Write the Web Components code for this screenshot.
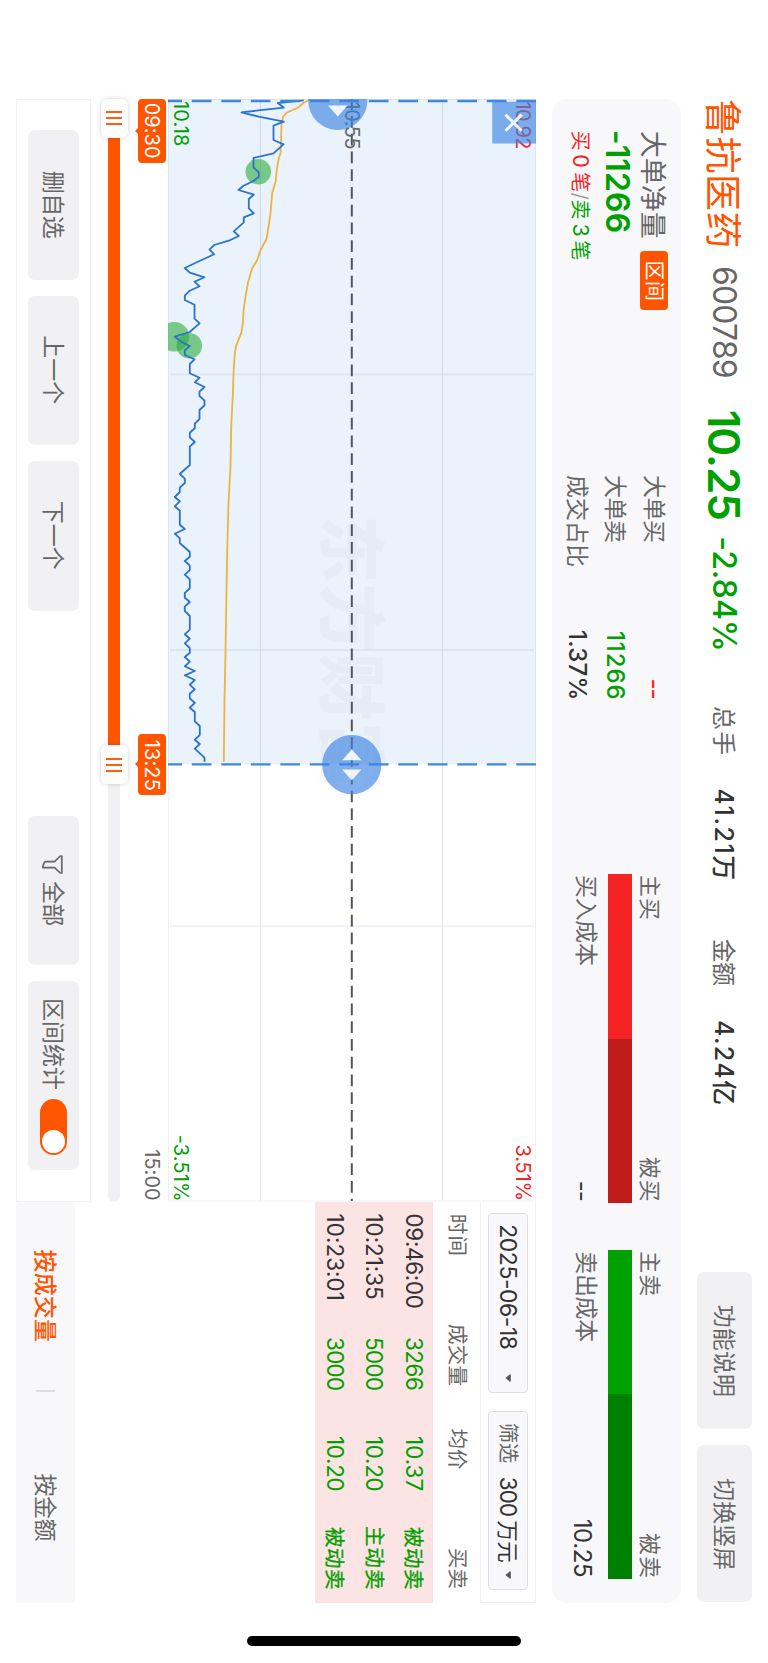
<!DOCTYPE html>
<html lang="zh-CN">
<head>
<meta charset="utf-8">
<title>大单净量</title>
<style>
html,body{margin:0;padding:0;background:#fff}
body{width:768px;height:1663px;overflow:hidden;position:relative}
</style>
</head>
<body>
<stock-app></stock-app>
<script>
const define = (name, css, html, setup) => {
  const tpl = document.createElement('template');
  tpl.innerHTML = `<style>:host{box-sizing:border-box}*{box-sizing:border-box}${css}</style>${html}`;
  customElements.define(name, class extends HTMLElement {
    connectedCallback() {
      if (this.shadowRoot) return;
      this.attachShadow({mode: 'open'}).append(tpl.content.cloneNode(true));
      if (setup) setup(this, this.shadowRoot);
    }
  });
};

/* One line of text spaced so that its ink fills exactly w pixels.
   w: width, s: font size, b: weight, c: colour, g: gap before, d: vertical nudge */
const FAMILY = 'Inter, "Noto Sans CJK SC", sans-serif';
const pen = document.createElement('canvas').getContext('2d');
define('fit-text', `:host{display:block;flex:none;white-space:nowrap;line-height:1}`, `<slot></slot>`, el => {
  const a = (k, f) => el.getAttribute(k) || f;
  const text = el.textContent, size = a('s', 23), weight = a('b', 400), w = +a('w', 50);
  pen.font = `${weight} ${size}px ${FAMILY}`;
  const m = pen.measureText(text);
  const ink = m.actualBoundingBoxLeft + m.actualBoundingBoxRight;
  const n = [...text].length;
  const nudge = a('d', /^[\u4e00-\u9fff]/.test(text) ? size * .055 : 0);
  Object.assign(el.style, {
    font: `${weight} ${size}px/1 ${FAMILY}`, color: a('c', '#666'), width: w + 'px',
    letterSpacing: (n > 1 ? (w - ink) / (n - 1) : 0) + 'px',
    textIndent: m.actualBoundingBoxLeft + 'px',
    marginLeft: a('g', 0) + 'px', marginTop: 2 * nudge + 'px'
  });
});

define('soft-button', `:host{display:flex;flex:none;align-items:center;justify-content:center;background:#f1f1f3;border-radius:7px}`, `<slot></slot>`);

define('quote-header', `
:host{display:flex;height:87px;align-items:center}
soft-button{height:55px;width:157.5px}`, `
<fit-text g="1" w="146.5" s="37" c="#ff5400" b="400">鲁抗医药</fit-text>
<fit-text g="20.5" w="109.7" s="32" d=".8">600789</fit-text>
<fit-text g="35" w="107.6" s="44" b="560" c="#00a000" d=".8">10.25</fit-text>
<fit-text g="19" w="110.7" s="32" b="500" c="#00a000" d=".8">-2.84%</fit-text>
<fit-text g="58" w="47.3" s="24">总手</fit-text>
<fit-text g="35" w="90" s="25" b="540" c="#333" d=".8">41.21万</fit-text>
<fit-text g="59.4" w="47.3" s="24">金额</fit-text>
<fit-text g="35" w="83" s="25" b="540" c="#333" d=".8">4.24亿</fit-text>
<soft-button style="margin-left:167.7px"><fit-text w="91.3">功能说明</fit-text></soft-button>
<soft-button style="margin-left:15.8px"><fit-text w="91.3">切换竖屏</fit-text></soft-button>`);

define('cost-bar', `
:host{display:block;width:328.7px;padding-top:20.7px}
.row{display:flex;justify-content:space-between;align-items:center;padding:0 2px}
.top{height:22px}.bar{height:23.7px;margin-top:6.6px;display:flex}.bottom{height:44.6px}
i{display:block;height:100%;background:var(--a)}i+i{flex:1;background:var(--b)}`, `
<div class="row top"><slot name="active"></slot><slot name="passive"></slot></div>
<div class="bar"><i></i><i></i></div>
<div class="row bottom"><slot name="cost"></slot><slot name="value"></slot></div>`,
(el, root) => { root.querySelector('i').style.width = el.getAttribute('split') + 'px'; });

define('order-panel', `
:host{display:flex;height:129px;width:1503.7px;border-radius:15px;background:#f8f8fb}
.net{width:376px;padding:8.2px 0 0 32.7px}
.net>div{display:flex;height:37px;align-items:center}
.tag{display:flex;align-items:center;justify-content:center;width:59.3px;height:28px;margin-left:13.3px;border-radius:4px;background:#ff5400}
.sum{width:223.5px;padding-top:7.5px}
.sum>div{display:flex;height:38.3px;align-items:center;justify-content:space-between}`, `
<div class="net">
 <div><fit-text w="106" s="27">大单净量</fit-text><span class="tag"><fit-text w="38.5" s="20" c="#fff" d=".3">区间</fit-text></span></div>
 <div><fit-text w="100" s="32" b="600" c="#00a000" d=".2">-11266</fit-text></div>
 <div><fit-text w="18.5" s="20" c="#f52424" d=".5">买</fit-text><fit-text g="5" w="11.5" s="21.5" c="#f52424" d=".3">0</fit-text><fit-text g="5.4" w="18.8" s="20" c="#f52424" d=".5">笔</fit-text><fit-text g="1.6" w="6.4" s="20" c="#999">/</fit-text><fit-text g="1.6" w="18.5" s="20" c="#00a000" d=".5">卖</fit-text><fit-text g="5.6" w="11" s="21.5" c="#00a000" d=".3">3</fit-text><fit-text g="4.8" w="18.8" s="20" c="#00a000" d=".5">笔</fit-text></div>
</div>
<div class="sum">
 <div><fit-text w="67">大单买</fit-text><fit-text w="19" s="24" b="500" c="#f52424" d=".8">--</fit-text></div>
 <div><fit-text w="67">大单卖</fit-text><fit-text w="66.6" s="24" b="540" c="#00a000" d=".6">11266</fit-text></div>
 <div><fit-text w="91">成交占比</fit-text><fit-text w="67.6" s="24" b="540" c="#333" d=".6">1.37%</fit-text></div>
</div>
<cost-bar split="164.7" style="margin-left:175.5px;--a:#f52424;--b:#c01c1c">
 <fit-text slot="active" w="43" s="22" d="-.6">主买</fit-text><fit-text slot="passive" w="44" s="22" d="-.6">被买</fit-text>
 <fit-text slot="cost" w="90" d=".4">买入成本</fit-text><fit-text slot="value" w="19" s="24" c="#333" d="4.2">--</fit-text>
</cost-bar>
<cost-bar split="144" style="margin-left:47.6px;--a:#00a000;--b:#008000">
 <fit-text slot="active" w="43" s="22" d="-.6">主卖</fit-text><fit-text slot="passive" w="44" s="22" d="-.6">被卖</fit-text>
 <fit-text slot="cost" w="90" d=".4">卖出成本</fit-text><fit-text slot="value" w="57.3" s="24" c="#333" d="4.2">10.25</fit-text>
</cost-bar>`);

/* Samples are [level, time], both in thirds of a pixel from the plot's lower left. */
const PRICE = '430,31 352,39 370,53 243,67 295,80 370,95 339,107 339,150 369,163 339,190 279,204 279,232 295,247 295,260 279,273 249,287 234,300 280,314 265,327 265,355 280,370 250,382 250,397 220,424 235,438 205,452 161,465 147,479 161,493 117,513 73,534 88,548 132,562 102,575 117,589 88,602 73,617 73,630 102,644 102,686 117,700 88,726 43,740 62,755 88,768 73,781 73,795 102,808 88,822 88,850 117,863 103,877 132,891 117,905 117,918 132,932';
const PRICE2 = '132,16 117,30 117,57 103,71 103,85 88,98 88,112 103,126 88,140 88,195 58,222 73,236 73,249 58,263 58,276 43,291 58,304 43,319 58,332 58,374 73,387 43,401 58,415 58,429 88,456 88,470 73,483 88,497 88,510 73,524 88,538 88,565 73,579 73,593 88,606 73,620 73,633 88,648 88,689 73,703 88,716 73,730 88,744 88,758 73,771 88,785 73,799 103,813 73,826 103,840 88,854 103,868 88,881 88,895 103,909 88,923 103,936 103,964 118,978 118,1005 103,1019 118,1032 103,1046 132,1073 132,1085';
const AVG = '445,31 430,38 412,53 378,68 368,80 363,100 362,140 360,190 355,205 350,230 345,275 335,310 330,370 325,405 318,447 300,480 290,510 275,535 263,575 255,620 250,655 247,700 243,727 226,770 222,800 219,850 217,920';
const AVG2 = '216,0 212,80 210,200 204,310 200,450 197,620 195,760 192,900 190,1085';
const trace = (s, off) => s.split(' ').map(p => { const [v, t] = p.split(',').map(Number);
  return ((t + off) / 3 - 9).toFixed(1) + ',' + (375.5 - v / 3).toFixed(1); }).join(' ');

define('time-chart', `
:host{display:block;position:relative;width:1102.5px;height:368px}
svg{display:block;position:absolute;left:0;top:0}
.lab{position:absolute}
.over{z-index:2}`, `
<svg width="1103" height="368" viewBox="0 0 1103 368">
 <g fill="none">
 <path d="M275.4 2V366M551 2V366M827.2 2V366" stroke="#eef1f7" stroke-width="1.8"/>
 <path d="M0 93.5H1102M0 275.5H1102" stroke="#dfe3ee" stroke-width="1"/>
 <rect x=".5" y=".5" width="1101.5" height="367" stroke="#f0f0f3"/>
 </g>
 <text x="416" y="210" font-family="Noto Sans CJK SC, sans-serif" font-size="68" letter-spacing="1" font-weight="900" fill="#000" fill-opacity=".025">东方财富</text>
 <rect width="665.3" height="368" fill="#2f7fe0" fill-opacity=".1"/>
 <path d="M0 184.2H1102" stroke="#555" stroke-width="2" stroke-dasharray="11.7 6.05" stroke-dashoffset=".7"/>
</svg>
<fit-text class="lab" style="left:2.5px;top:2.7px" w="46.8" s="20" c="#f52424">10.92</fit-text>
<fit-text class="lab" style="left:2.5px;top:173.7px" w="47" s="20">10.55</fit-text>
<fit-text class="lab" style="left:2px;top:344.8px" w="45" s="20" c="#00a000">10.18</fit-text>
<fit-text class="lab" style="left:1046.5px;top:2.7px" w="54" s="20" c="#f52424">3.51%</fit-text>
<fit-text class="lab" style="left:1036.7px;top:344.8px" w="64.3" s="20" c="#00a000">-3.51%</fit-text>
<svg class="over" width="1103" height="368" viewBox="0 0 1103 368">
 <g fill="#2aab3c" fill-opacity=".6"><circle cx="72.7" cy="277.7" r="12.8"/><circle cx="237.7" cy="361.7" r="14.8"/><circle cx="246.7" cy="346.7" r="12.8"/></g>
 <g fill="none" stroke-linejoin="round" stroke-width="1.8"><polyline id="avg" stroke="#efb240"/><polyline id="price" stroke="#2a72cc"/></g>
 <path d="M2 0V368M665.3 0V368" stroke="#3e86e6" stroke-width="2.3" stroke-dasharray="19.7 9.8"/>
 <g fill="#3a83e2" fill-opacity=".64"><circle cx="1.3" cy="198.2" r="29.6"/><circle cx="665.6" cy="184.2" r="29.6"/><path d="M2.8 0H44.6V43.8H2.8z"/></g>
 <g fill="#fff" fill-opacity=".88"><path d="M6.5 188.5v19.4L17.5 198.2zM661.3 174.5v19.4L650.5 184.2zM670.6 174.5v19.4L681.2 184.2z"/></g>
 <path d="M15.6 14.3l16.2 16.2M31.8 14.3L15.6 30.5" stroke="#fff" stroke-opacity=".88" stroke-width="3"/>
</svg>`, (el, root) => {
  root.getElementById('price').setAttribute('points', trace(PRICE, 0) + ' ' + trace(PRICE2, 930));
  root.getElementById('avg').setAttribute('points', trace(AVG, 0) + ' ' + trace(AVG2, 930));
});

define('time-tag', `
:host{position:absolute;top:2.2px;display:flex;align-items:center;justify-content:center;height:27.7px;border-radius:4px;background:#ff5400}
i{position:absolute;top:27px;left:var(--arrow,50%);margin-left:-4.5px;border:4.5px solid transparent;border-top-color:#ff5400;border-bottom:0}`, `<slot></slot><i></i>`);

define('slider-thumb', `
:host{position:absolute;top:40px;width:39.3px;height:27.4px;border-radius:6px;background:#fff;box-shadow:0 0 5px rgba(0,0,0,.18);display:flex;align-items:center;justify-content:center;gap:4px}
i{display:block;width:2px;height:15.7px;background:#ff5f14}`, `<i></i><i></i><i></i>`);

define('range-slider', `
:host{display:block;position:relative;height:77px;width:1102.5px}
.axis{height:48px;display:flex;justify-content:flex-end;padding:6px 1.5px 0 0}
.track{height:11.7px;border-radius:6px;background:#f1f1f3;overflow:hidden}
.track div{width:665px;height:100%;background:#ff5400}`, `
<div class="axis"><fit-text w="50.7" s="20">15:00</fit-text></div>
<div class="track"><div></div></div>
<time-tag style="left:-.3px;width:64.3px;--arrow:32.3px"><fit-text w="54.3" s="20" c="#fff">09:30</fit-text></time-tag>
<time-tag style="left:635.3px;width:60.7px"><fit-text w="50" s="20" c="#fff">13:25</fit-text></time-tag>
<slider-thumb style="left:-.3px"></slider-thumb><slider-thumb style="left:646px"></slider-thumb>`);

define('tool-bar', `
:host{display:flex;align-items:center;height:75px;width:1102.5px;border:1px solid #f1f1f4;padding-left:30px}
soft-button{width:149.5px;height:51px;margin-right:16px}
.stat{width:189px;margin:0;padding-left:4px}
svg{margin:2px 7px 0 0}
.switch{width:55.7px;height:27.5px;border-radius:14px;background:#ff5400;display:flex;justify-content:flex-end;align-items:center;padding-right:2px;margin-left:9.5px}
.switch i{width:23.6px;height:23.6px;border-radius:50%;background:#fff}`, `
<soft-button><fit-text w="68">删自选</fit-text></soft-button>
<soft-button><fit-text w="68">上一个</fit-text></soft-button>
<soft-button><fit-text w="68">下一个</fit-text></soft-button>
<soft-button style="margin-left:189px"><svg width="19" height="22" viewBox="0 0 19 22" fill="none" stroke="#666" stroke-width="1.7" stroke-linejoin="round"><path d="M1 1.2H18V2.7L12.6 8.5V20.2Q7.2 19.4 6.6 17.6V8.5L1 2.7z"/></svg><fit-text w="44">全部</fit-text></soft-button>
<soft-button class="stat"><fit-text w="90">区间统计</fit-text><span class="switch"><i></i></span></soft-button>`);

define('select-box', `
:host{display:flex;align-items:center;width:179.4px;height:39.5px;border:1px solid #dedee4;border-radius:4px;background:#f8f8fb;padding:0 10px 0 11px}
svg{margin-left:auto}`, `<slot></slot><svg width="8" height="6" viewBox="0 0 8 6"><path d="M.3 1Q.3 .2 1.2 .2H6.8Q7.7 .2 7.7 1L4.6 5Q4 5.8 3.4 5z" fill="#555"/></svg>`);

define('trade-row', `
:host{display:grid;grid-template-columns:123.5px 99px 89px 1fr;height:39.4px;align-items:center;padding-left:13px;background:#fde4e4}`,
`<slot></slot>`);

define('trade-list', `
:host{display:block;width:401.2px}
.filters{display:flex;height:55.5px;border:1px solid #f1f1f4;border-left:0;padding:7.3px 0 0 11.8px;gap:18.1px}
.head{display:flex;height:47.5px;align-items:center}`, `
<div class="filters">
 <select-box><fit-text w="123.5" s="23" c="#333">2025-06-18</fit-text></select-box>
 <select-box><fit-text w="40" s="20.5" d=".4">筛选</fit-text><fit-text g="15" w="38.3" s="22.5" c="#333">300</fit-text><fit-text g="4.2" w="42" s="21.5" c="#333" d=".4">万元</fit-text></select-box>
</div>
<div class="head"><fit-text g="13.2" w="39.8" s="20.5" d=".2">时间</fit-text><fit-text g="69.5" w="61.5" s="20.5" d=".2">成交量</fit-text><fit-text g="43" w="40.5" s="20.5" d=".2">均价</fit-text><fit-text g="80" w="39.5" s="20.5" d=".2">买卖</fit-text></div>
<div id="rows"></div>`, (el, root) => {
  root.getElementById('rows').innerHTML = [['09:46:00', 93.3, '3266', '10.37', '被动卖'], ['10:21:35', 84.5, '5000', '10.20', '主动卖'], ['10:23:01', 85.3, '3000', '10.20', '被动卖']]
    .map(([t, w, v, p, k]) => `<trade-row><fit-text w="${w}" s="22.5" c="#333">${t}</fit-text><fit-text w="52" s="22.5" c="#00a000">${v}</fit-text><fit-text w="53.5" s="22.5" c="#00a000">${p}</fit-text><fit-text g="1" w="62" s="20.5" c="#00a000" d=".5" style="-webkit-text-stroke:.3px #00a000">${k}</fit-text></trade-row>`).join('');
});

define('mode-tabs', `
:host{display:flex;align-items:center;height:59px;width:401.2px;background:#f8f8fb}
i{width:2px;height:19.7px;background:#dedee2;margin-left:49px}`, `
<fit-text g="48" w="91.5" b="500" c="#ff5400">按成交量</fit-text><i></i><fit-text g="81.5" w="68">按金额</fit-text>`);

define('stock-app', `
:host{position:absolute;left:0;top:0;display:flex;width:1663px;height:768px;padding-left:99px;transform-origin:0 0;transform:translateX(768px) rotate(90deg);background:#fff}
main{width:1504px}
.body{display:flex;height:520px;margin-top:16px}
.side{display:flex;flex-direction:column;justify-content:space-between}
.home{width:10px;height:273.5px;border-radius:5px;background:#000;margin:247px 0 0 33px}`, `
<main>
 <quote-header></quote-header>
 <order-panel></order-panel>
 <div class="body">
  <div><time-chart></time-chart><range-slider></range-slider><tool-bar></tool-bar></div>
  <div class="side"><trade-list></trade-list><mode-tabs></mode-tabs></div>
 </div>
</main>
<div class="home"></div>`);
</script>
</body>
</html>
